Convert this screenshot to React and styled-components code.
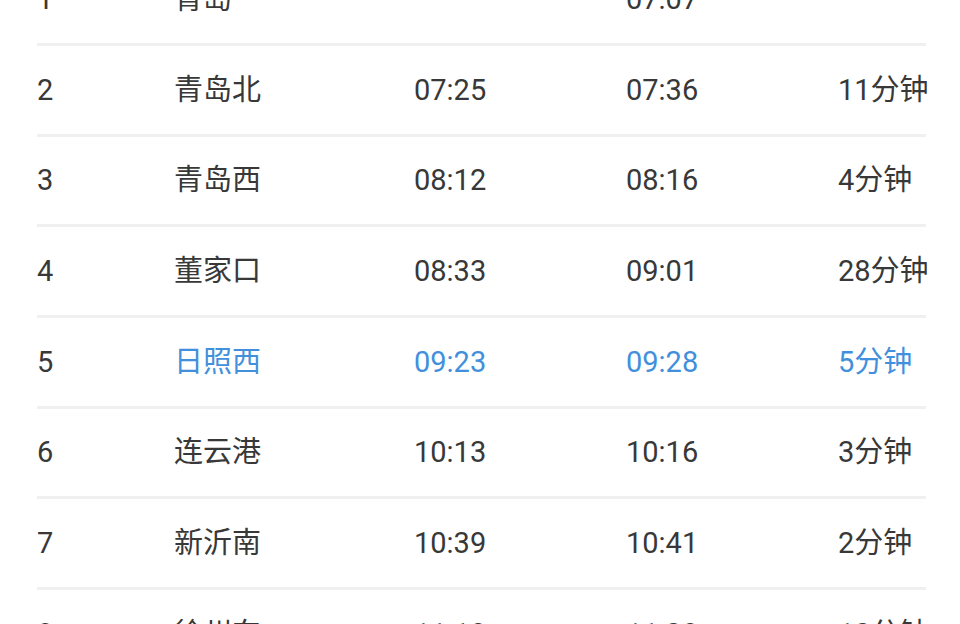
import React from 'react'
import styled, { createGlobalStyle } from 'styled-components'

const GlobalStyle = createGlobalStyle`
  html, body {
    margin: 0;
    padding: 0;
    background: #fff;
    overflow: hidden;
  }
  body {
    font-family: Roboto, "Noto Sans CJK SC", "Noto Sans", sans-serif;
  }
`

const Page = styled.div`
  width: 960px;
  height: 624px;
  overflow: hidden;
  background: #fff;
`

const List = styled.ul`
  list-style: none;
  margin: -44.67px 0 0 0;
  padding: 0 34px 0 37px;
`

const Row = styled.li`
  display: grid;
  grid-template-columns: 137px 240px 212px 212px 1fr;
  align-items: center;
  height: 90.67px;
  box-sizing: border-box;
  padding-top: 1px;
  border-bottom: 3px solid #f0f0f0;
  font-size: 29px;
  line-height: 1;
  color: #383838;
`

const Cell = styled.span`
  white-space: nowrap;
  color: ${p => (p.$active ? '#4290dc' : 'inherit')};
`

const stops = [
  ['1', '青岛', '', '07:07', ''],
  ['2', '青岛北', '07:25', '07:36', '11分钟'],
  ['3', '青岛西', '08:12', '08:16', '4分钟'],
  ['4', '董家口', '08:33', '09:01', '28分钟'],
  ['5', '日照西', '09:23', '09:28', '5分钟'],
  ['6', '连云港', '10:13', '10:16', '3分钟'],
  ['7', '新沂南', '10:39', '10:41', '2分钟'],
  ['8', '徐州东', '11:18', '11:28', '10分钟']
]

const ACTIVE = '5'

export default function App () {
  return (
    <Page>
      <GlobalStyle />
      <List>
        {stops.map(([no, name, arrive, depart, stay]) => {
          const active = no === ACTIVE
          return (
            <Row key={no}>
              <Cell>{no}</Cell>
              <Cell $active={active}>{name}</Cell>
              <Cell $active={active}>{arrive}</Cell>
              <Cell $active={active}>{depart}</Cell>
              <Cell $active={active}>{stay}</Cell>
            </Row>
          )
        })}
      </List>
    </Page>
  )
}
